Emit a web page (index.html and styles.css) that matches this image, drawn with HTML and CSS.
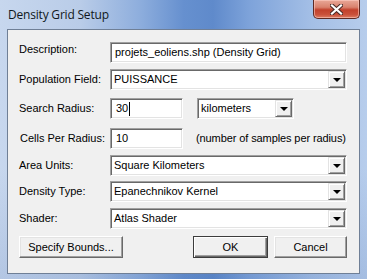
FILE: index.html
```html
<!DOCTYPE html>
<html>
<head>
<meta charset="utf-8">
<link rel="stylesheet" href="styles.css">
</head>
<body>
<div class="window">
  <div class="titlebar">
    <span class="title">Density Grid Setup</span>
    <div class="close">
      <svg width="13" height="11" viewBox="0 0 13 11">
        <path d="M2 1.5 L11 9.5 M11 1.5 L2 9.5" stroke="#4a2a26" stroke-width="4.2" stroke-linecap="square"/>
        <path d="M2 1.5 L11 9.5 M11 1.5 L2 9.5" stroke="#ffffff" stroke-width="2.2" stroke-linecap="square"/>
      </svg>
    </div>
  </div>
  <div class="client">
    <div class="form">
      <div class="label raised">Description:</div>
      <div class="field"><div class="edit full">projets_eoliens.shp (Density Grid)</div></div>

      <div class="label">Population Field:</div>
      <div class="field"><div class="combo full"><span class="combo-text">PUISSANCE</span><span class="arrow"><i></i></span></div></div>

      <div class="label">Search Radius:</div>
      <div class="field"><div class="edit short">30<span class="caret"></span></div><div class="combo units"><span class="combo-text">kilometers</span><span class="arrow"><i></i></span></div></div>

      <div class="label indent">Cells Per Radius:</div>
      <div class="field"><div class="edit short">10</div><span class="hint">(number of samples per radius)</span></div>

      <div class="label">Area Units:</div>
      <div class="field"><div class="combo full"><span class="combo-text">Square Kilometers</span><span class="arrow"><i></i></span></div></div>

      <div class="label">Density Type:</div>
      <div class="field"><div class="combo full"><span class="combo-text">Epanechnikov Kernel</span><span class="arrow"><i></i></span></div></div>

      <div class="label">Shader:</div>
      <div class="field"><div class="combo full"><span class="combo-text">Atlas Shader</span><span class="arrow"><i></i></span></div></div>
    </div>
    <div class="buttons">
      <div class="btn bounds">Specify Bounds...</div>
      <div class="spacer"></div>
      <div class="btn ok default">OK</div>
      <div class="btn cancel">Cancel</div>
    </div>
  </div>
</div>
</body>
</html>
```
FILE: styles.css
```css
html, body {
  margin: 0;
  padding: 0;
  background: #ffffff;
}
.window {
  width: 367px;
  height: 279px;
  box-sizing: border-box;
  display: flex;
  flex-direction: column;
  background:
    linear-gradient(180deg, rgba(255,255,255,0) 0%, rgba(255,255,255,0) 60%, rgba(40,80,150,0.12) 100%),
    linear-gradient(90deg, #c7d7ee 0%, #b9cce8 22%, #8eaedd 38%, #6690cf 50%, #5f8acb 58%, #7ea3da 68%, #a4bfe6 85%, #b7cdec 100%);
  font-family: "Liberation Sans", Arial, sans-serif;
  font-size: 11px;
  color: #000;
}
.titlebar {
  height: 29px;
  flex: none;
  display: flex;
  align-items: flex-start;
  padding-left: 8px;
}
.title {
  font-family: "Open Sans", "Noto Sans", sans-serif;
  font-size: 12px;
  line-height: 12px;
  margin-top: 9px;
  color: #101820;
  letter-spacing: -0.2px;
}
.close {
  margin-left: auto;
  margin-right: 7px;
  width: 47px;
  height: 19px;
  box-sizing: border-box;
  border: 1px solid #5e2a24;
  border-top: none;
  border-radius: 0 0 5px 5px;
  background: linear-gradient(180deg, #e9a898 0%, #d9826e 40%, #c2412c 55%, #c9503a 80%, #dc7b62 100%);
  box-shadow: inset 0 0 0 1px rgba(255,210,200,0.55);
  display: flex;
  align-items: center;
  justify-content: center;
}
.close svg { display: block; }
.client {
  flex: 1;
  margin: 0 7px 5px 7px;
  border: 1px solid #6f7f96;
  background: #f0f0f0;
  display: flex;
  flex-direction: column;
  padding: 12px 12px 0 11px;
}
.form {
  display: grid;
  grid-template-columns: 91px 1fr;
  grid-template-rows: 27px 29px 30px 27px 26px 27px 28px;
}
.label {
  height: 21px;
  line-height: 21px;
  white-space: nowrap;
}
.label.raised { line-height: 14px; }
.label.indent { padding-left: 1px; }
.field {
  display: flex;
  align-items: flex-start;
  height: 21px;
}
.edit, .combo {
  height: 21px;
  box-sizing: border-box;
  background: #fff;
  border: 1px solid;
  border-color: #a0a0a0 #ffffff #ffffff #a0a0a0;
  box-shadow: inset 1px 1px 0 #696969, inset -1px -1px 0 #e3e3e3;
  white-space: nowrap;
  overflow: hidden;
}
.edit {
  padding: 0 4px;
  line-height: 19px;
  font-size: 11px;
  display: flex;
  align-items: center;
}
.edit.full { width: 237px; }
.edit.short { width: 73px; padding-left: 5px; }
.caret {
  width: 1px;
  height: 14px;
  background: #000;
  margin-left: 1px;
}
.combo {
  display: flex;
  align-items: stretch;
  padding: 1px;
}
.combo.full { width: 237px; }
.combo.units { width: 97px; margin-left: 14px; }
.combo-text {
  flex: 1;
  line-height: 17px;
  padding-left: 2px;
  font-size: 11px;
}
.arrow {
  width: 17px;
  box-sizing: border-box;
  background: #f0f0f0;
  border: 1px solid;
  border-color: #e3e3e3 #696969 #696969 #e3e3e3;
  box-shadow: inset 1px 1px 0 #fff, inset -1px -1px 0 #a0a0a0;
  display: flex;
  align-items: center;
  justify-content: center;
}
.arrow i {
  width: 0;
  height: 0;
  border-left: 4px solid transparent;
  border-right: 4px solid transparent;
  border-top: 4px solid #000;
  margin-top: 1px;
}
.hint {
  margin-left: 13px;
  line-height: 21px;
  font-size: 11px;
  letter-spacing: -0.1px;
  white-space: nowrap;
}
.buttons {
  display: flex;
  width: 328px;
}
.spacer { flex: 1; }
.btn {
  height: 22px;
  box-sizing: border-box;
  border: 1px solid;
  border-color: #ffffff #696969 #696969 #ffffff;
  box-shadow: inset -1px -1px 0 #a0a0a0, inset 1px 1px 0 #e3e3e3;
  background: #f0f0f0;
  display: flex;
  align-items: center;
  justify-content: center;
  font-size: 11px;
  white-space: nowrap;
}
.btn.bounds { width: 104px; }
.btn.ok { width: 75px; }
.btn.cancel { width: 73px; margin-left: 6px; }
.btn.default {
  border-color: #3c3c3c;
  box-shadow: inset 1px 1px 0 #fff, inset -1px -1px 0 #696969, inset -2px -2px 0 #a0a0a0;
}
```
